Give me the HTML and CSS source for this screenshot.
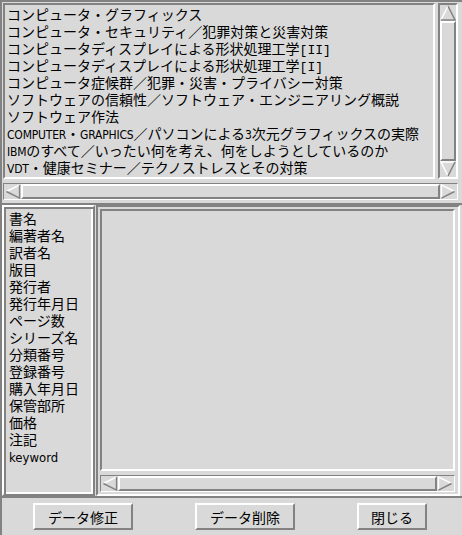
FILE: index.html
```html
<!DOCTYPE html>
<html lang="ja">
<head>
<meta charset="utf-8">
<title>書誌データ</title>
<link rel="stylesheet" href="styles.css">
</head>
<body>
<div class="app">
  <div class="top">
    <div class="listbox">
      <div class="item">コンピュータ・グラフィックス</div>
      <div class="item">コンピュータ・セキュリティ／犯罪対策と災害対策</div>
      <div class="item">コンピュータディスプレイによる形状処理工学<span class="mono">[II]</span></div>
      <div class="item">コンピュータディスプレイによる形状処理工学<span class="mono">[I]</span></div>
      <div class="item">コンピュータ症候群／犯罪・災害・プライバシー対策</div>
      <div class="item">ソフトウェアの信頼性／ソフトウェア・エンジニアリング概説</div>
      <div class="item">ソフトウェア作法</div>
      <div class="item"><span class="lat">COMPUTER</span>・<span class="lat">GRAPHICS</span>／パソコンによる<span class="lat">3</span>次元グラフィックスの実際</div>
      <div class="item"><span class="lat">IBM</span>のすべて／いったい何を考え、何をしようとしているのか</div>
      <div class="item"><span class="lat">VDT</span>・健康セミナー／テクノストレスとその対策</div>
    </div>
    <div class="vscroll">
      <svg class="arrow" viewBox="0 0 16 16"><polygon points="8,1 15,15 1,15" fill="#d9d9d9"/><polyline points="1,15 8,1" stroke="#ffffff" stroke-width="1.5" fill="none"/><polyline points="8,1 15,15 1,15" stroke="#828282" stroke-width="1.5" fill="none"/></svg>
      <div class="slider"></div>
      <svg class="arrow" viewBox="0 0 16 16"><polygon points="1,1 15,1 8,15" fill="#d9d9d9"/><polyline points="8,15 1,1 15,1" stroke="#ffffff" stroke-width="1.5" fill="none"/><polyline points="15,1 8,15" stroke="#828282" stroke-width="1.5" fill="none"/></svg>
    </div>
    <div class="hscroll">
      <svg class="arrow" viewBox="0 0 16 16"><polygon points="1,8 15,1 15,15" fill="#d9d9d9"/><polyline points="1,8 15,1" stroke="#ffffff" stroke-width="1.5" fill="none"/><polyline points="15,1 15,15 1,8" stroke="#828282" stroke-width="1.5" fill="none"/></svg>
      <div class="slider"></div>
      <svg class="arrow" viewBox="0 0 16 16"><polygon points="1,1 15,8 1,15" fill="#d9d9d9"/><polyline points="1,15 1,1 15,8" stroke="#ffffff" stroke-width="1.5" fill="none"/><polyline points="15,8 1,15" stroke="#828282" stroke-width="1.5" fill="none"/></svg>
    </div>
  </div>
  <div class="middle">
    <div class="labels">
      <div class="item">書名</div>
      <div class="item">編著者名</div>
      <div class="item">訳者名</div>
      <div class="item">版目</div>
      <div class="item">発行者</div>
      <div class="item">発行年月日</div>
      <div class="item">ページ数</div>
      <div class="item">シリーズ名</div>
      <div class="item">分類番号</div>
      <div class="item">登録番号</div>
      <div class="item">購入年月日</div>
      <div class="item">保管部所</div>
      <div class="item">価格</div>
      <div class="item">注記</div>
      <div class="item"><span class="lat lat-lg">keyword</span></div>
    </div>
    <div class="detail">
      <div class="textarea"></div>
      <div class="hscroll">
        <svg class="arrow" viewBox="0 0 16 16"><polygon points="1,8 15,1 15,15" fill="#d9d9d9"/><polyline points="1,8 15,1" stroke="#ffffff" stroke-width="1.5" fill="none"/><polyline points="15,1 15,15 1,8" stroke="#828282" stroke-width="1.5" fill="none"/></svg>
        <div class="slider"></div>
        <svg class="arrow" viewBox="0 0 16 16"><polygon points="1,1 15,8 1,15" fill="#d9d9d9"/><polyline points="1,15 1,1 15,8" stroke="#ffffff" stroke-width="1.5" fill="none"/><polyline points="15,8 1,15" stroke="#828282" stroke-width="1.5" fill="none"/></svg>
      </div>
    </div>
  </div>
  <div class="buttons">
    <button class="btn">データ修正</button>
    <button class="btn">データ削除</button>
    <button class="btn btn-small">閉じる</button>
  </div>
</div>
</body>
</html>
```

FILE: styles.css
```css
html, body {
  margin: 0;
  padding: 0;
  background: #d9d9d9;
}

body {
  font-family: "Noto Sans CJK JP", "DejaVu Sans", sans-serif;
  font-size: 14px;
  color: #000;
}

.lat {
  font-family: "DejaVu Sans Condensed", "DejaVu Sans", sans-serif;
  font-size: 12px;
  letter-spacing: -0.2px;
}

.lat-lg {
  font-size: 13px;
  letter-spacing: 0;
}

.mono {
  font-family: "Liberation Mono", monospace;
  font-size: 13px;
}

.app {
  width: 462px;
  height: 535px;
  display: flex;
  flex-direction: column;
  box-sizing: border-box;
  overflow: hidden;
}

.top {
  box-sizing: border-box;
  height: 203px;
  border-top: 2px solid #828282;
  border-left: 2px solid #828282;
  padding: 1px 4px 0 1px;
  display: grid;
  grid-template-columns: 1fr 20px;
  grid-template-rows: 176px 17px;
  column-gap: 3px;
  row-gap: 4px;
}

.listbox {
  box-sizing: border-box;
  border: 2px solid;
  border-color: #828282 #ffffff #ffffff #828282;
  padding: 1px 2px;
  overflow: hidden;
  white-space: nowrap;
}

.item {
  height: 17px;
  line-height: 17px;
}

.vscroll {
  box-sizing: border-box;
  border: 2px solid;
  border-color: #828282 #ffffff #ffffff #828282;
  display: flex;
  flex-direction: column;
  align-items: center;
}

.vscroll .arrow {
  width: 16px;
  height: 16px;
  flex: none;
}

.vscroll .slider {
  flex: 1;
  width: 16px;
  box-sizing: border-box;
  border: 2px solid;
  border-color: #ffffff #828282 #828282 #ffffff;
}

.hscroll {
  grid-column: 1 / 3;
  box-sizing: border-box;
  border: 1px solid;
  border-color: #828282 #ffffff #ffffff #828282;
  display: flex;
  align-items: center;
  padding: 0 1px;
}

.hscroll .arrow {
  width: 16px;
  height: 15px;
  flex: none;
}

.hscroll .slider {
  flex: 1;
  height: 15px;
  box-sizing: border-box;
  border: 2px solid;
  border-color: #ffffff #828282 #828282 #ffffff;
}

.middle {
  box-sizing: border-box;
  height: 293px;
  border-top: 2px solid #828282;
  border-left: 2px solid #828282;
  display: flex;
  gap: 1px;
}

.labels {
  box-sizing: border-box;
  width: 93px;
  border: 2px solid;
  border-color: #ffffff #828282 #828282 #ffffff;
  box-shadow: inset 2px 2px 0 #828282, inset -2px -2px 0 #ffffff;
  padding: 3px 5px;
  white-space: nowrap;
  overflow: hidden;
}

.detail {
  flex: 1;
  box-sizing: border-box;
  border: 2px solid;
  border-color: #828282 #ffffff #ffffff #828282;
  margin-right: 2px;
  padding: 2px 3px 2px 2px;
  display: flex;
  flex-direction: column;
  gap: 4px;
}

.textarea {
  flex: 1;
  box-sizing: border-box;
  border: 2px solid;
  border-color: #828282 #ffffff #ffffff #828282;
}

.detail .hscroll {
  height: 17px;
  flex: none;
}

.buttons {
  flex: 1;
  box-sizing: border-box;
  border-top: 2px solid #828282;
  border-left: 2px solid #828282;
  display: flex;
  align-items: center;
  gap: 62px;
  padding-left: 31px;
}

.btn {
  box-sizing: border-box;
  width: 100px;
  height: 27px;
  background: #d9d9d9;
  border: 2px solid;
  border-color: #ffffff #828282 #828282 #ffffff;
  font-family: "Noto Sans CJK JP", "DejaVu Sans", sans-serif;
  font-size: 14px;
  color: #000;
  padding: 0;
  line-height: 22px;
}

.btn-small {
  width: 70px;
}
```
